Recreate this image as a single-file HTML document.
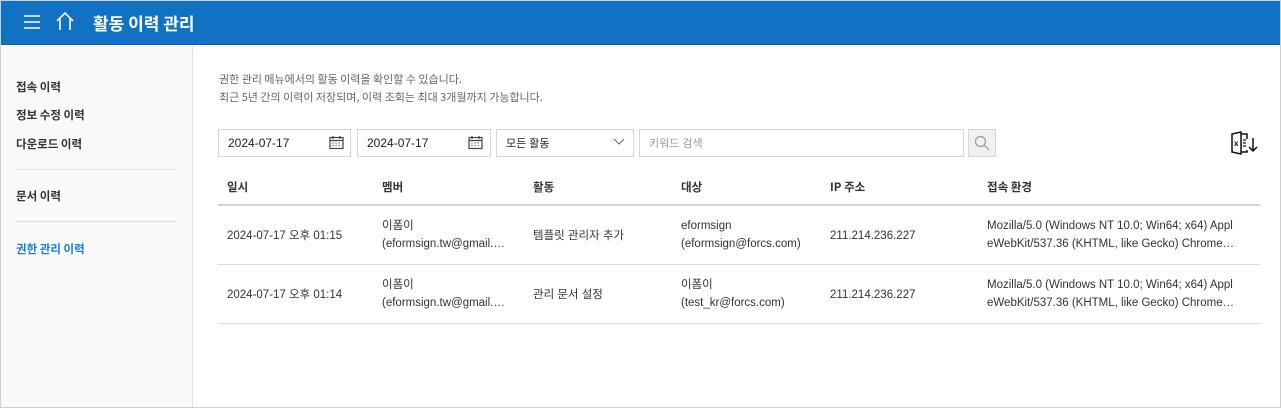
<!DOCTYPE html>
<html><head><meta charset="utf-8"><style>
*{margin:0;padding:0;box-sizing:border-box}
body{width:1281px;height:408px;overflow:hidden;background:#fff;font-family:"Liberation Sans","Noto Sans CJK KR",sans-serif;color:#333;position:relative}
.frame{position:absolute;left:0;top:0;width:1281px;height:408px;border:1px solid #cfcfcf}
.hdr{position:absolute;left:0;top:0;width:1281px;height:45px;background:#1172c4;border-bottom:1px solid #0d5fa8}
.hdr .t{position:absolute;left:93px;top:10px;font-size:17px;font-weight:bold;color:#fff;font-family:"Noto Sans CJK KR",sans-serif}
.side{position:absolute;left:1px;top:46px;width:192px;height:361px;background:#f9f9f9;border-right:1px solid #e2e2e2}
.side div{position:absolute;left:15px;font-size:11.5px;font-weight:bold;color:#333;font-family:"Noto Sans CJK KR",sans-serif}
.side hr{position:absolute;left:15px;width:160px;border:0;border-top:1px solid #ddd}
.abs{position:absolute;font-family:"Noto Sans CJK KR",sans-serif}
.desc{left:219px;top:70px;font-size:11px;color:#666;line-height:18px}
.box{position:absolute;top:129px;height:28px;border:1px solid #d6d6d6;background:#fff;font-size:12px;color:#222;padding:6px 0 0 9px;font-family:"Liberation Sans","Noto Sans CJK KR",sans-serif}
.th{position:absolute;top:179px;font-size:11.5px;font-weight:bold;color:#333;font-family:"Noto Sans CJK KR",sans-serif}
.td{position:absolute;font-size:11.5px;color:#333;line-height:18px;white-space:nowrap;font-family:"Liberation Sans","Noto Sans CJK KR",sans-serif}
.line{position:absolute;left:218px;width:1042px;border-top:1px solid #ddd}
</style></head><body>
<div class="hdr">
<svg style="position:absolute;left:23px;top:14px" width="18" height="16"><path d="M1 2H17M1 8H17M1 14H17" stroke="#fff" stroke-width="1.6"/></svg>
<svg style="position:absolute;left:55px;top:11px" width="20" height="20"><path d="M2 10L10 2L18 10M5 8V19M15 8V19" stroke="#fff" stroke-width="1.6" fill="none"/></svg>
<div class="t">활동 이력 관리</div>
</div>
<div class="side">
<div style="top:33px">접속 이력</div>
<div style="top:61px">정보 수정 이력</div>
<div style="top:90px">다운로드 이력</div>
<hr style="top:123px">
<div style="top:142px">문서 이력</div>
<hr style="top:175px">
<div style="top:195px;color:#1a7fd0">권한 관리 이력</div>
</div>
<div class="abs desc">권한 관리 메뉴에서의 활동 이력을 확인할 수 있습니다.<br>최근 5년 간의 이력이 저장되며, 이력 조회는 최대 3개월까지 가능합니다.</div>
<div class="box" style="left:218px;width:133px">2024-07-17</div>
<div class="box" style="left:357px;width:134px">2024-07-17</div>
<svg style="position:absolute;left:329px;top:135px" width="15" height="15"><rect x="1" y="2.5" width="13" height="11" fill="none" stroke="#444" stroke-width="1.2"/><path d="M1 5.5H14M4 1V4M11 1V4M3.5 8h1M6.5 8h1M9.5 8h1M3.5 10.5h1M6.5 10.5h1M9.5 10.5h1" stroke="#444" stroke-width="1.2"/></svg>
<svg style="position:absolute;left:468px;top:135px" width="15" height="15"><rect x="1" y="2.5" width="13" height="11" fill="none" stroke="#444" stroke-width="1.2"/><path d="M1 5.5H14M4 1V4M11 1V4M3.5 8h1M6.5 8h1M9.5 8h1M3.5 10.5h1M6.5 10.5h1M9.5 10.5h1" stroke="#444" stroke-width="1.2"/></svg>
<div class="box" style="left:496px;width:138px;font-size:11px;padding-top:5px">모든 활동</div>
<svg style="position:absolute;left:613px;top:138px" width="12" height="8"><path d="M1 1L6 6L11 1" stroke="#666" fill="none"/></svg>
<div class="box" style="left:639px;width:325px;font-size:11px;color:#999;padding-top:5px">키워드 검색</div>
<div class="box" style="left:968px;width:28px;background:#eef0f2;padding:0"></div>
<svg style="position:absolute;left:974px;top:135px" width="16" height="16"><circle cx="6.5" cy="6.5" r="5" fill="none" stroke="#999" stroke-width="1.2"/><path d="M10 10L15 15" stroke="#999" stroke-width="1.2"/></svg>
<svg style="position:absolute;left:1230px;top:130px" width="30" height="26"><path d="M2 4L11 2V24L2 22Z" fill="none" stroke="#111" stroke-width="1.5"/><path d="M11 4H17V9M11 22H17V20" fill="none" stroke="#111" stroke-width="1.5"/><text x="4" y="16" font-size="8" font-family="Liberation Sans" font-weight="bold" fill="#111">x</text><path d="M13 10h3M13 13h3M13 16h3" stroke="#111" stroke-width="1.3"/><path d="M23 8V21M19 17L23 21L27 17" fill="none" stroke="#111" stroke-width="1.5"/></svg>
<div class="th" style="left:227px">일시</div>
<div class="th" style="left:382px">멤버</div>
<div class="th" style="left:533px">활동</div>
<div class="th" style="left:681px">대상</div>
<div class="th" style="left:830px">IP 주소</div>
<div class="th" style="left:987px">접속 환경</div>
<div class="line" style="top:204px;border-top:2px solid #d4d4d4"></div>
<div class="td" style="left:227px;top:227px">2024-07-17 오후 01:15</div>
<div class="td" style="left:382px;top:217px">이폼이<br>(eformsign.tw@gmail.…</div>
<div class="td" style="left:533px;top:227px">템플릿 관리자 추가</div>
<div class="td" style="left:681px;top:217px">eformsign<br>(eformsign@forcs.com)</div>
<div class="td" style="left:830px;top:227px">211.214.236.227</div>
<div class="td" style="left:987px;top:217px">Mozilla/5.0 (Windows NT 10.0; Win64; x64) Appl<br>eWebKit/537.36 (KHTML, like Gecko) Chrome…</div>
<div class="line" style="top:264px"></div>
<div class="td" style="left:227px;top:286px">2024-07-17 오후 01:14</div>
<div class="td" style="left:382px;top:276px">이폼이<br>(eformsign.tw@gmail.…</div>
<div class="td" style="left:533px;top:286px">관리 문서 설정</div>
<div class="td" style="left:681px;top:276px">이폼이<br>(test_kr@forcs.com)</div>
<div class="td" style="left:830px;top:286px">211.214.236.227</div>
<div class="td" style="left:987px;top:276px">Mozilla/5.0 (Windows NT 10.0; Win64; x64) Appl<br>eWebKit/537.36 (KHTML, like Gecko) Chrome…</div>
<div class="line" style="top:323px"></div>
<div class="frame"></div>
</body></html>
